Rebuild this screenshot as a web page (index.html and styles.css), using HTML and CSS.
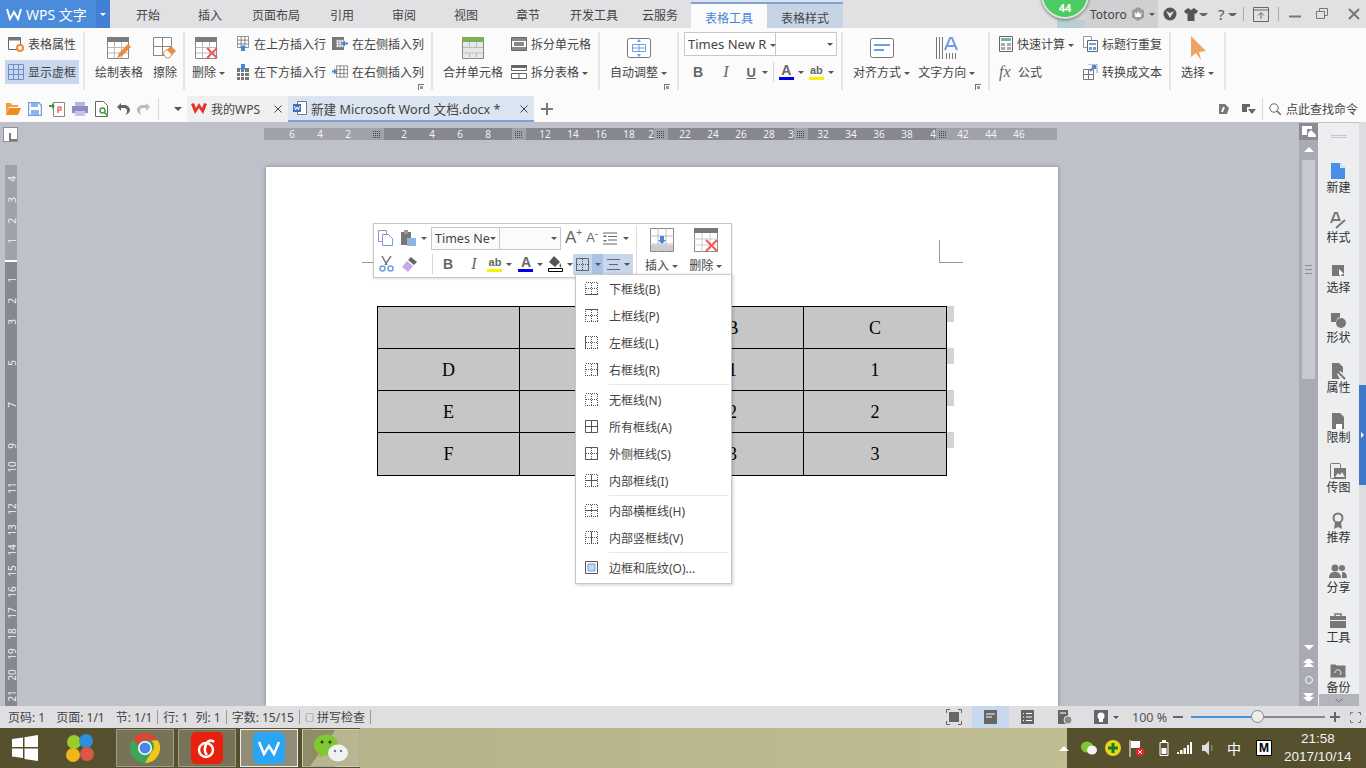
FILE: index.html
```html
<!DOCTYPE html>
<html lang="zh-CN">
<head>
    <meta charset="UTF-8">
    <title>新建 Microsoft Word 文档.docx - WPS 文字</title>
    <link rel="stylesheet" href="styles.css">
</head>
<body>
<svg class="defs" width="0" height="0">
    <symbol id="dots" viewBox="0 0 13 13">
        <path d="M.5.5h12v12H.5zM6.500.5v12M.5 6.500h12" fill="none" stroke="#555" stroke-dasharray="1 1" shape-rendering="crispEdges"/>
    </symbol>
    <symbol id="tbl" viewBox="0 0 16 16">
        <path d="M.5.5h15v15H.5zM5.500.5v15M10.500.5v15M.5 5.500h15M.5 10.500h15" fill="#fff" stroke="#666"/>
    </symbol>
</svg>

<div class="app">
    <header class="titlebar">
        <div class="logo">
            <svg width="16" height="14" viewBox="0 0 16 14"><path d="M1 2l3 10 4-7 4 7 3-10" fill="none" stroke="#fff" stroke-width="2"/></svg>
            <span class="logo-text">WPS 文字</span>
            <span class="logo-drop"><i class="arr white"></i></span>
        </div>
        <nav class="tabs">
            <span class="tab">开始</span>
            <span class="tab">插入</span>
            <span class="tab wide">页面布局</span>
            <span class="tab">引用</span>
            <span class="tab">审阅</span>
            <span class="tab">视图</span>
            <span class="tab">章节</span>
            <span class="tab wide">开发工具</span>
            <span class="tab">云服务</span>
            <span class="tab tool active">表格工具</span>
            <span class="tab tool second">表格样式</span>
        </nav>
        <div class="title-right">
            <div class="badge-slot">
                <span class="badge">44</span>
            </div>
            <div class="user">
                <span>Totoro</span>
                <svg width="16" height="16" viewBox="0 0 16 16"><path d="M8 1l6 3.500v7L8 15l-6-3.500v-7z" fill="#9a9a9a"/><path d="M4.500 6l2 2L8 5l1.500 3 2-2-.8 5H5.300z" fill="#fff"/></svg>
                <i class="arr"></i>
            </div>
            <div class="win-btns">
                <svg width="14" height="14" viewBox="0 0 14 14"><circle cx="7" cy="7" r="6.500" fill="#555"/><path d="M3 4l4 7 4-7-4 2z" fill="#e1e1e3"/></svg>
                <svg class="shirt" width="14" height="13" viewBox="0 0 14 13"><path d="M4 0L0 3l2 3 1.500-1v8h7V5L12 6l2-3-4-3-3 2z" fill="#555"/></svg>
                <i class="arr small"></i>
                <span class="help">?</span>
                <i class="arr small"></i>
                <span class="wsep"></span>
                <svg class="upbox" width="16" height="15" viewBox="0 0 16 15"><path d="M.5.5h15v14H.5zM1 3h14M8 12V6M5 8.500L8 5.500l3 3" fill="none" stroke="#666"/></svg>
                <span class="wsep"></span>
                <svg class="min" width="12" height="12" viewBox="0 0 12 12"><path d="M0 8.500h12" stroke="#777" stroke-width="2"/></svg>
                <svg class="restore" width="12" height="12" viewBox="0 0 12 12"><path d="M.5 3.500h8v7h-8zM3.500 3V.5h8v7H9" fill="none" stroke="#777"/></svg>
                <svg class="close" width="12" height="12" viewBox="0 0 12 12"><path d="M1 1l10 10M11 1L1 11" stroke="#777" stroke-width="2"/></svg>
            </div>
        </div>
    </header>

    <section class="ribbon">
        <div class="group g1">
            <div class="rows">
                <div class="small">
                    <svg width="16" height="16" viewBox="0 0 16 16"><path d="M.5 1.500h12v12H.5z" fill="#fff" stroke="#666"/><path d="M.5 1.500h12v3H.5z" fill="#777"/><circle cx="12" cy="12" r="3" fill="#fff" stroke="#ec8b3c" stroke-width="2"/></svg>
                    <span>表格属性</span>
                </div>
                <div class="small on">
                    <svg width="16" height="16" viewBox="0 0 16 16"><path d="M.5.5h15v15H.5zM5.500.5v15M10.500.5v15M.5 5.500h15M.5 10.500h15" fill="none" stroke="#6f8fc9"/></svg>
                    <span>显示虚框</span>
                </div>
            </div>
        </div>

        <div class="group g2">
            <div class="large">
                <svg width="24" height="24" viewBox="0 0 24 24"><path d="M.5 1.500h21v21H.5z" fill="#fff" stroke="#888"/><path d="M0 1h22v5H0z" fill="#7b7b7b"/><path d="M7.500 6v16M14.500 6v16M1 11.500h20M1 17h20" stroke="#bbb"/><path d="M10 22l2-5 9-9 3 3-9 9z" fill="#ee8a3c"/></svg>
                <span>绘制表格</span>
            </div>
            <div class="large">
                <svg width="24" height="24" viewBox="0 0 24 24"><path d="M.5 1.500h18v18H.5zM9.500 1.500v18M.5 10.500h18" fill="#fff" stroke="#888"/><path d="M10 17l8-7 5 5-7 7h-3z" fill="#ee8a3c"/><path d="M10 17l4-3.500 5 5L16 22h-3z" fill="#fff" stroke="#ee8a3c"/></svg>
                <span>擦除</span>
            </div>
        </div>

        <div class="group g3">
            <div class="large del">
                <svg width="24" height="24" viewBox="0 0 24 24"><path d="M.5 1.500h21v21H.5z" fill="#fff" stroke="#888"/><path d="M0 1h22v5H0z" fill="#7b7b7b"/><path d="M7.500 6v16M14.500 6v16M1 11.500h20M1 17h20" stroke="#bbb"/><path d="M12 12l10 10M22 12L12 22" stroke="#ee5b5b" stroke-width="2"/></svg>
                <span>删除 <i class="arr"></i></span>
            </div>
            <div class="rows grid2 col-96">
                <div class="small">
                    <svg width="14" height="16" viewBox="0 0 14 16"><use href="#tbl" width="12" height="12" x="1"/><path d="M7 9l4 3H9v3H5v-3H3z" fill="#4a86d8"/></svg>
                    <span>在上方插入行</span>
                </div>
                <div class="small">
                    <svg width="16" height="16" viewBox="0 0 16 16"><path d="M0 1h12v13H0z" fill="#777"/><use href="#tbl" width="8" height="13" x="4" y="1"/><path d="M9 7.500l4-3v2h3v2h-3v2z" fill="#4a86d8"/></svg>
                    <span>在左侧插入列</span>
                </div>
                <div class="small">
                    <svg width="14" height="16" viewBox="0 0 14 16"><path d="M1 4h12v12H1z" fill="#777"/><path d="M4.500 4v12M8.500 4v12M1 8.500h12M1 12.500h12" stroke="#fff"/><path d="M7 7L3 4h2V0h4v4h2z" fill="#4a86d8"/></svg>
                    <span>在下方插入行</span>
                </div>
                <div class="small">
                    <svg width="16" height="16" viewBox="0 0 16 16"><use href="#tbl" width="12" height="13" x="4" y="1"/><path d="M6 7.500l-4-3v2H0v2h2v2z" fill="#4a86d8"/></svg>
                    <span>在右侧插入列</span>
                </div>
            </div>
            <i class="launcher"></i>
        </div>

        <div class="group g4">
            <div class="large merge">
                <svg width="24" height="24" viewBox="0 0 24 24"><path d="M1.500 1.500h21v21h-21z" fill="#e8e8e8" stroke="#888"/><path d="M1 1h22v5H1z" fill="#7ab056"/><path d="M8.500 6v5M15.500 6v5M8.500 17v6M15.500 17v6M2 11.500h20M2 17h20" stroke="#bbb"/></svg>
                <span>合并单元格</span>
            </div>
            <div class="rows col-1">
                <div class="small">
                    <svg width="16" height="16" viewBox="0 0 16 16"><path d="M.5 1.500h15v13H.5z" fill="#fff" stroke="#666"/><path d="M1 2h14v3H1zM1 11h14v3H1zM3 6h10v4H3z" fill="#888"/></svg>
                    <span>拆分单元格</span>
                </div>
                <div class="small">
                    <svg width="16" height="16" viewBox="0 0 16 16"><path d="M0 1h16v2H0z" fill="#666"/><path d="M.5 3.500h15v3H.5zM.5 9.500h15v5H.5zM8 9.500v5" fill="#fff" stroke="#666"/></svg>
                    <span>拆分表格 <i class="arr"></i></span>
                </div>
            </div>
        </div>

        <div class="group g5">
            <div class="large">
                <svg width="24" height="24" viewBox="0 0 24 24"><rect x=".5" y="2.500" width="23" height="19" rx="2" fill="#fff" stroke="#777"/><path d="M5.500 8.500h13v7h-13zM12 8.500v7M5.500 12h13" fill="none" stroke="#6f9de0"/><path d="M12 3l2 3h-4zM12 21l2-3h-4z" fill="#6f9de0"/></svg>
                <span>自动调整 <i class="arr"></i></span>
            </div>
            <i class="launcher"></i>
        </div>

        <div class="group g6">
            <div class="fontbox">
                <span class="fname">Times New R <i class="arr"></i></span>
                <span class="fsize"><i class="arr"></i></span>
            </div>
            <div class="fmt">
                <b class="fb">B</b>
                <i class="fi">I</i>
                <span class="fu">U</span><i class="arr"></i>
                <span class="vsep"></span>
                <span class="fcolor">A</span><i class="arr"></i>
                <span class="fhi">ab</span><i class="arr"></i>
            </div>
        </div>

        <div class="group g7">
            <div class="large">
                <svg width="24" height="24" viewBox="0 0 24 24"><rect x=".5" y="2.500" width="23" height="19" rx="2" fill="#fff" stroke="#777"/><path d="M4 9h16M4 14h10" stroke="#6f9de0" stroke-width="2"/></svg>
                <span>对齐方式 <i class="arr"></i></span>
            </div>
            <div class="large">
                <svg width="24" height="24" viewBox="0 0 24 24"><path d="M1.500 1v22M4.500 1v22M7.500 1v22M11.500 17v6M14.500 17v6M17.500 17v6M20.500 17v6" stroke="#777"/><path d="M10 14l5-12h2l5 12M12 10h8" fill="none" stroke="#6f9de0" stroke-width="2"/></svg>
                <span>文字方向 <i class="arr"></i></span>
            </div>
            <i class="launcher"></i>
        </div>

        <div class="group g8">
            <div class="rows grid2 col-84">
                <div class="small">
                    <svg width="14" height="16" viewBox="0 0 14 16"><path d="M.5.5h13v15H.5z" fill="#fff" stroke="#666"/><path d="M2 2h10v3H2z" fill="#6fb8a8"/><path d="M2 7h4v3H2zM8 7h4v3H8zM2 11h4v3H2zM8 11h4v3H8z" fill="#aaa"/></svg>
                    <span>快速计算 <i class="arr"></i></span>
                </div>
                <div class="small">
                    <svg width="15" height="16" viewBox="0 0 15 16"><path d="M.5.5h8v11h-8z" fill="#fff" stroke="#999"/><path d="M4.500 4.500h10v11h-10z" fill="#fff" stroke="#666"/><path d="M6 7h7v2H6zM6 11h3v3H6zM10 11h3v3h-3z" fill="#6f9de0"/></svg>
                    <span>标题行重复</span>
                </div>
                <div class="small">
                    <span class="fx">fx</span>
                    <span>公式</span>
                </div>
                <div class="small">
                    <svg width="15" height="16" viewBox="0 0 15 16"><path d="M.5 5.500h10v10H.5zM5.500 5.500v10M.5 10.500h10" fill="#fff" stroke="#777"/><path d="M5 0h9v9" fill="none" stroke="#999"/><path d="M7 7l5-5M9 2h3v3" fill="none" stroke="#4a86d8" stroke-width="2"/></svg>
                    <span>转换成文本</span>
                </div>
            </div>
        </div>

        <div class="group g9">
            <div class="large">
                <svg width="24" height="24" viewBox="0 0 24 24"><path d="M5 0l15 15-7 1 2 8-5-7-5 4z" fill="#eda363"/></svg>
                <span>选择 <i class="arr"></i></span>
            </div>
        </div>
    </section>

    <div class="quickbar">
        <div class="qa">
            <svg width="16" height="14" viewBox="0 0 16 14"><path d="M1 1h5l1 2h6v2H4l-3 8z" fill="#f2a03d"/><path d="M1 13l3-7h12l-3 7z" fill="#f08d1f"/></svg>
            <svg width="14" height="14" viewBox="0 0 14 14"><path d="M.5.5h10l3 3v10H.5z" fill="#fff" stroke="#6f9de0" stroke-width="1.500"/><path d="M3 1h7v4H3zM3 8h8v5H3z" fill="#8fb3e8"/></svg>
            <svg width="16" height="15" viewBox="0 0 16 15"><path d="M4.500.5h11v14h-11z" fill="#fff" stroke="#888"/><path d="M9 11V5h3v3H9" fill="none" stroke="#d44" stroke-width="1.200"/><path d="M0 3h3V1l3 3-3 3V5H0z" fill="#3c9a3c"/></svg>
            <svg width="16" height="14" viewBox="0 0 16 14"><path d="M3 0h10v4H3z" fill="#b6b6dc"/><path d="M0 4h16v7H0z" fill="#8d8dc6"/><path d="M3 9h10v5H3z" fill="#c6c6e6"/></svg>
            <svg width="14" height="16" viewBox="0 0 14 16"><path d="M.5.5h8l4 4v11H.5z" fill="#fff" stroke="#666"/><circle cx="7.500" cy="9.500" r="2.500" fill="none" stroke="#3c9a3c" stroke-width="1.400"/><path d="M9.500 11.500l3 3" stroke="#3c9a3c" stroke-width="1.600"/></svg>
            <svg width="14" height="14" viewBox="0 0 14 14"><path d="M5 1L1 5l4 4V6h3a3 3 0 013 3c0 2-1 3-2 4 3-1 5-3 5-5 0-3-3-5-6-5H5z" fill="#666"/></svg>
            <svg width="14" height="14" viewBox="0 0 14 14"><path d="M9 1l4 4-4 4V6H6a3 3 0 00-3 3c0 2 1 3 2 4-3-1-5-3-5-5 0-3 3-5 6-5h3z" fill="#bbb"/></svg>
            <span class="qsep"></span>
            <i class="arr big"></i>
        </div>
        <div class="doc-tab home">
            <svg width="16" height="12" viewBox="0 0 16 12"><path d="M0 1l4 10 4-6 4 6 4-10-3-1-2 5-3-5-3 5-2-5z" fill="#e0332d"/></svg>
            <span>我的WPS</span>
            <svg class="x" width="8" height="8" viewBox="0 0 8 8"><path d="M.5.5l7 7M7.500.5l-7 7" stroke="#444"/></svg>
        </div>
        <div class="doc-tab cur">
            <svg width="14" height="14" viewBox="0 0 14 14"><path d="M4.500.5h9v13h-9z" fill="#fff" stroke="#777"/><path d="M0 3h8v8H0z" fill="#3f6fb8"/><path d="M1.500 5l1 4 1.500-3 1.500 3 1-4" fill="none" stroke="#fff"/></svg>
            <span class="doc-name">新建 Microsoft Word 文档.docx *</span>
            <svg class="x" width="8" height="8" viewBox="0 0 8 8"><path d="M.5.5l7 7M7.500.5l-7 7" stroke="#444"/></svg>
        </div>
        <svg class="plus" width="12" height="12" viewBox="0 0 12 12"><path d="M6 0v12M0 6h12" stroke="#777" stroke-width="2"/></svg>
        <div class="q-right">
            <svg width="10" height="12" viewBox="0 0 10 12"><path d="M0 1h6l4 4-2 6H0z" fill="#777"/><path d="M5 4L3 9" stroke="#fff" stroke-width="2"/></svg>
            <svg class="q-pin" width="14" height="11" viewBox="0 0 14 11"><path d="M0 0h8v3h-3v5H0z" fill="#666"/><path d="M6 5h8l-4 5z" fill="#666"/></svg>
            <span class="qsep"></span>
            <svg width="12" height="12" viewBox="0 0 12 12"><circle cx="5" cy="5" r="4.200" fill="none" stroke="#666"/><path d="M8 8l4 4" stroke="#666" stroke-width="1.500"/></svg>
            <span>点此查找命令</span>
        </div>
    </div>

    <div class="workspace">
        <div class="canvas">
            <div class="corner-cell"><span class="corner"></span></div>
            <div class="hruler-cell">
                <div class="hruler">
                    <span>6</span><span>4</span><span>2</span>
                    <em class="mk mk1"></em>
                    <span>2</span><span>4</span><span>6</span><span>8</span>
                    <em class="mk mk2"></em>
                    <span>12</span><span>14</span><span>16</span><span>18</span><span class="cut">2</span>
                    <em class="mk mk3"></em>
                    <span>22</span><span>24</span><span>26</span><span>28</span><span class="cut">3</span>
                    <em class="mk mk4"></em>
                    <span>32</span><span>34</span><span>36</span><span>38</span><span class="cut c4">4</span>
                    <em class="mk mk5"></em>
                    <span>42</span><span>44</span><span>46</span>
                </div>
            </div>
            <div class="vruler-cell">
                <div class="vruler">
                    <div class="v-top">
                        <span>4</span><span>3</span><span>2</span><span>1</span>
                    </div>
                    <div class="v-main">
                        <span>1</span><span>2</span><span>3</span><span></span><span>5</span><span></span><span>7</span><span></span><span>9</span><span>10</span><span>11</span><span>12</span><span>13</span><span>14</span><span>15</span><span>16</span><span>17</span><span>18</span><span>19</span><span>20</span><span>21</span>
                    </div>
                </div>
            </div>
            <div class="page">
                <span class="crop crop-l"></span>
                <span class="crop crop-r"></span>
                <div class="table-wrap">
                    <table class="doc-table">
                        <tr><td></td><td></td><td>B</td><td>C</td></tr>
                        <tr><td>D</td><td></td><td>1</td><td>1</td></tr>
                        <tr><td>E</td><td></td><td>2</td><td>2</td></tr>
                        <tr><td>F</td><td></td><td>3</td><td>3</td></tr>
                    </table>
                    <div class="row-marks"><i></i><i></i><i></i><i></i></div>
                </div>
            </div>
        </div>

        <div class="scrollbar">
            <div class="sb-top">
                <svg width="14" height="12" viewBox="0 0 14 12"><path d="M0 0h10v3H5v6H0z" fill="#fff"/><path d="M6 11V7l3-3 5 5v2z" fill="#fff"/></svg>
            </div>
            <i class="tri up"></i>
            <div class="thumb"><span class="grip"></span></div>
            <div class="sb-bottom">
                <i class="tri down"></i>
                <span class="dbl">
                    <i class="tri up small"></i><i class="tri up small"></i>
                </span>
                <span class="ring"></span>
                <span class="dbl">
                    <i class="tri down small"></i><i class="tri down small"></i>
                </span>
            </div>
        </div>

        <aside class="sidebar">
            <div class="side-grip"></div>
            <div class="side-item">
                <svg width="16" height="18" viewBox="0 0 16 18"><path d="M1 1h9l5 5v11H1z" fill="#4a8fe6"/><path d="M10 1l5 5h-5z" fill="#d6e6fa"/></svg>
                <span>新建</span>
            </div>
            <div class="side-item">
                <svg width="16" height="18" viewBox="0 0 16 18"><path d="M1 11L5 1h2l3 8M3 8h6" fill="none" stroke="#777" stroke-width="2"/><path d="M6 16l9-8" stroke="#777" stroke-width="2"/></svg>
                <span>样式</span>
            </div>
            <div class="side-item">
                <svg width="14" height="18" viewBox="0 0 14 18"><path d="M1 3h12v11H1z" fill="#777"/><path d="M8 7l5 5-3 .5 1 3-3-3z" fill="#fff"/></svg>
                <span>选择</span>
            </div>
            <div class="side-item">
                <svg width="16" height="18" viewBox="0 0 16 18"><path d="M1 1h9v4a6 6 0 00-4 5H1z" fill="#777"/><circle cx="11" cy="11" r="5" fill="#777"/></svg>
                <span>形状</span>
            </div>
            <div class="side-item">
                <svg width="16" height="18" viewBox="0 0 16 18"><path d="M2 1h7l4 4v6l-3-2-3 3 3 5H2z" fill="#777"/><path d="M8 10l7 7" stroke="#777" stroke-width="2"/></svg>
                <span>属性</span>
            </div>
            <div class="side-item">
                <svg width="14" height="18" viewBox="0 0 14 18"><path d="M1 1h8l4 4v12H1z" fill="#777"/><path d="M5 12h6v5H5z" fill="#fff"/></svg>
                <span>限制</span>
            </div>
            <div class="side-item">
                <svg width="16" height="18" viewBox="0 0 16 18"><rect x=".5" y="1.500" width="10" height="15" rx="1" fill="none" stroke="#777"/><path d="M4 6h12v11H4z" fill="#777"/><path d="M5 15l3-4 2 2 2-3 3 5z" fill="#eee"/></svg>
                <span>传图</span>
            </div>
            <div class="side-item">
                <svg width="14" height="18" viewBox="0 0 14 18"><circle cx="7" cy="6" r="4.500" fill="none" stroke="#777" stroke-width="2"/><path d="M4 10l-1 7 4-2 4 2-1-7" fill="#777"/></svg>
                <span>推荐</span>
            </div>
            <div class="side-item">
                <svg width="18" height="18" viewBox="0 0 18 18"><circle cx="6" cy="6" r="3.500" fill="#777"/><circle cx="13" cy="6" r="3" fill="#777"/><path d="M0 16c0-5 3-6 6-6s6 1 6 6zM13 10c3 0 5 1 5 6h-5z" fill="#777"/></svg>
                <span>分享</span>
            </div>
            <div class="side-item">
                <svg width="16" height="18" viewBox="0 0 16 18"><path d="M5 4V2h6v2" fill="none" stroke="#777" stroke-width="1.500"/><path d="M0 4h16v4H0zM0 9h16v7H0z" fill="#777"/></svg>
                <span>工具</span>
            </div>
            <div class="side-item">
                <svg width="16" height="18" viewBox="0 0 16 18"><path d="M.5 2.500h5l1 1h9v12H.5z" fill="#777"/><path d="M5 11a3 3 0 115 2" fill="none" stroke="#eee"/></svg>
                <span>备份</span>
            </div>
            <div class="side-more">
                <svg width="8" height="5" viewBox="0 0 8 5"><path d="M.5.5L4 4 7.500.5" fill="none" stroke="#777"/></svg>
            </div>
        </aside>

        <div class="edge"><span class="edge-blue"><i></i></span></div>
    </div>

    <footer class="statusbar">
        <div class="st-left">
            <span>页码: 1</span>
            <span>页面: 1/1</span>
            <span>节: 1/1</span>
            <span class="bar"></span>
            <span>行: 1</span>
            <span class="col-no">列: 1</span>
            <span class="bar"></span>
            <span>字数: 15/15</span>
            <span class="bar"></span>
            <span class="spell"><span class="chk">□</span>拼写检查</span>
            <span class="bar"></span>
        </div>
        <div class="st-right">
            <span class="view">
                <svg width="16" height="16" viewBox="0 0 16 16"><path d="M3 3h10v10H3z" fill="#666"/><path d="M.5 4V.5H4M12 .5h3.500V4M.5 12v3.500H4M12 15.500h3.500V12" fill="none" stroke="#666"/></svg>
            </span>
            <span class="view sel">
                <svg width="13" height="14" viewBox="0 0 13 14"><path d="M0 0h13v14H0z" fill="#666"/><path d="M2 4h9M2 7h6" stroke="#fff"/></svg>
            </span>
            <span class="view">
                <svg width="13" height="14" viewBox="0 0 13 14"><path d="M0 0h13v14H0z" fill="#666"/><path d="M2 3.500h1M5 3.500h6M2 7h1M5 7h6M2 10.500h1M5 10.500h6" stroke="#fff"/></svg>
            </span>
            <span class="view">
                <svg width="14" height="14" viewBox="0 0 14 14"><path d="M0 0h10v14H0z" fill="#666"/><path d="M2 3h6" stroke="#fff"/><circle cx="10" cy="10" r="4" fill="#888" stroke="#dfdfe2"/></svg>
            </span>
            <span class="view bulb">
                <svg width="14" height="14" viewBox="0 0 14 14"><path d="M0 0h14v14H0z" fill="#666"/><circle cx="7" cy="6" r="3.500" fill="#fff"/><path d="M5 9h4v3H5z" fill="#fff"/></svg>
                <i class="arr"></i>
            </span>
            <span class="zoom-val">100 %</span>
            <svg class="z-minus" width="10" height="2" viewBox="0 0 10 2"><path d="M0 1h10" stroke="#666" stroke-width="2"/></svg>
            <div class="slider"><span class="fill"></span><span class="knob"></span></div>
            <svg class="z-plus" width="10" height="10" viewBox="0 0 10 10"><path d="M5 0v10M0 5h10" stroke="#666" stroke-width="2"/></svg>
            <svg class="z-full" width="11" height="11" viewBox="0 0 11 11"><path d="M.5 3V.5H3M8 .5h2.500V3M.5 8v2.500H3M8 10.500h2.500V8" fill="none" stroke="#777"/></svg>
        </div>
    </footer>

    <div class="taskbar">
        <div class="start">
            <svg width="26" height="26" viewBox="0 0 26 26"><path d="M0 4l11-1.500V12H0zM12.500 2.300L26 0v12H12.500zM0 13.500h11V23L0 21.500zM12.500 13.500H26V26l-13.500-2z" fill="#fff"/></svg>
        </div>
        <div class="pinned">
            <svg width="30" height="30" viewBox="0 0 30 30"><circle cx="9" cy="9" r="7" fill="#9ccc2c"/><circle cx="21" cy="8" r="7" fill="#2d8fdc"/><circle cx="8" cy="22" r="7" fill="#f0b41e"/><circle cx="22" cy="21" r="7" fill="#d9584a"/></svg>
        </div>
        <div class="task">
            <svg width="30" height="30" viewBox="0 0 30 30"><circle cx="15" cy="15" r="15" fill="#3ba558"/><path d="M15 0a15 15 0 0113 7.500H15a7.500 7.500 0 00-7 5L3 6a15 15 0 0112-6z" fill="#dc4437"/><path d="M28 7.500A15 15 0 0115 30l6.500-11a7.500 7.500 0 000-11.500z" fill="#f5c518"/><circle cx="15" cy="15" r="7" fill="#fff"/><circle cx="15" cy="15" r="5.500" fill="#4a86e8"/></svg>
        </div>
        <div class="task">
            <svg width="32" height="32" viewBox="0 0 32 32"><rect width="32" height="32" rx="5" fill="#e8200e"/><circle cx="15" cy="18" r="7" fill="none" stroke="#fff" stroke-width="2.500"/><path d="M16 23c-3-3-3-8 0-12 1-3 5-3 7-1" fill="none" stroke="#fff" stroke-width="2.500"/></svg>
        </div>
        <div class="task active">
            <svg width="32" height="32" viewBox="0 0 32 32"><rect width="32" height="32" rx="6" fill="#2aa5f5"/><path d="M6 10l5 12 5-8 5 8 5-12" fill="none" stroke="#fff" stroke-width="2.500"/></svg>
        </div>
        <div class="task wx">
            <svg width="34" height="28" viewBox="0 0 34 28"><ellipse cx="12" cy="11" rx="12" ry="10.500" fill="#80c832"/><path d="M6 18l-1 6 6-4z" fill="#80c832"/><circle cx="8" cy="8" r="1.500" fill="#333"/><circle cx="16" cy="8" r="1.500" fill="#333"/><ellipse cx="24" cy="19" rx="10" ry="8.500" fill="#f2f2f2"/><circle cx="21" cy="17" r="1.200" fill="#777"/><circle cx="27" cy="17" r="1.200" fill="#777"/></svg>
        </div>
        <div class="tb-space"></div>
        <div class="tray">
            <i class="tri up tray-up"></i>
            <svg width="16" height="14" viewBox="0 0 16 14"><ellipse cx="6" cy="6" rx="6" ry="5.500" fill="#80c832"/><ellipse cx="11" cy="9" rx="5" ry="4.500" fill="#f2f2f2"/></svg>
            <svg width="16" height="16" viewBox="0 0 16 16"><circle cx="8" cy="8" r="8" fill="#e8d418"/><path d="M8 3v10M3 8h10" stroke="#0c7c1e" stroke-width="3"/></svg>
            <svg class="flag" width="16" height="17" viewBox="0 0 16 17"><path d="M1 0v17" stroke="#fff"/><path d="M2 1h9v7H2z" fill="#fff"/><circle cx="11" cy="12" r="4.500" fill="#e02828"/><path d="M9 10l4 4M13 10l-4 4" stroke="#fff"/></svg>
            <svg width="10" height="16" viewBox="0 0 10 16"><path d="M1 2.500h8v13H1z" fill="none" stroke="#fff"/><path d="M3 0h4v2H3zM2.500 8h5v6h-5z" fill="#fff"/></svg>
            <svg class="signal" width="15" height="12" viewBox="0 0 15 12"><path d="M0 10h2v2H0zM3 8h2.500v4H3zM6.500 6H9v6H6.500zM10 3h2v9h-2zM13 0h2v12h-2z" fill="#fff"/></svg>
            <svg width="12" height="14" viewBox="0 0 12 14"><path d="M0 4h3l4-4v14l-4-4H0z" fill="#ddd"/><path d="M9 4c1.500 2 1.500 4 0 6" fill="none" stroke="#aaa"/></svg>
            <span class="ime">中</span>
            <span class="mbox">M</span>
            <div class="clock"><span>21:58</span><span>2017/10/14</span></div>
        </div>
    </div>

    <!-- floating table toolbar -->
    <div class="float-bar">
        <div class="fb-left">
            <div class="fb-row">
                <svg class="ml1" width="15" height="16" viewBox="0 0 15 16"><path d="M.5.5h8v11h-8z" fill="#fff" stroke="#999"/><path d="M4.500 4.500h6l4 4v7h-10z" fill="#fff" stroke="#6f9de0"/></svg>
                <svg class="ml8" width="16" height="16" viewBox="0 0 16 16"><path d="M0 2h10v13H0z" fill="#777"/><path d="M3 0h4v4H3z" fill="#999"/><path d="M6 8h9v8H6z" fill="#8fb3e8"/></svg>
                <i class="arr ml4"></i>
                <div class="fb-font">
                    <span class="name"><span class="nm">Times Ne</span><i class="arr"></i></span>
                    <span class="size"><i class="arr"></i></span>
                </div>
                <span class="grow ml4">A<sup>+</sup></span>
                <span class="grow shrink ml4">A<sup>-</sup></span>
                <svg class="ml5" width="14" height="13" viewBox="0 0 14 13"><path d="M0 1h14M5 4.500h9M5 8h9M0 12h14" stroke="#666"/><path d="M2 3l2 2H0zM2 10l2-2H0z" fill="#666"/></svg>
                <i class="arr ml6"></i>
            </div>
            <div class="fb-row row2">
                <svg class="ml2" width="15" height="16" viewBox="0 0 15 16"><path d="M3 0l5 9M12 0L6 9" stroke="#777" stroke-width="1.500"/><circle cx="3.500" cy="12.500" r="2.500" fill="none" stroke="#6f9de0" stroke-width="1.500"/><circle cx="11.500" cy="12.500" r="2.500" fill="none" stroke="#6f9de0" stroke-width="1.500"/></svg>
                <svg class="ml8" width="15" height="15" viewBox="0 0 15 15"><path d="M9 0l6 5-3 3-6-5z" fill="#666"/><path d="M5 4l6 5-5 6-6-5z" fill="#c9a8ea"/></svg>
                <span class="vsep ml15"></span>
                <b class="fb ml10">B</b>
                <i class="fi ml18">I</i>
                <span class="fhi ml11">ab</span><i class="arr ml4"></i>
                <span class="fcolor ml6">A</span><i class="arr ml4"></i>
                <svg class="ml5" width="15" height="16" viewBox="0 0 15 16"><path d="M6 0l6 6-5 5-6-5z" fill="#555"/><path d="M12 7c1 2 2 3 1 4s-2 0-1-4z" fill="#555"/><path d="M.5 12.500h14v3H.5z" fill="#fff" stroke="#000"/></svg>
                <i class="arr ml4"></i>
                <div class="fb-on">
                    <span class="bd"><svg width="13" height="13"><use href="#dots"/><path d="M.5.5h12v12H.5z" fill="none" stroke="#666"/></svg></span>
                    <span class="bd-arr"><i class="arr"></i></span>
                    <span class="al"><svg width="13" height="11" viewBox="0 0 13 11"><path d="M0 .5h13M2 5.500h9M0 10.500h13" stroke="#666"/></svg><i class="arr"></i></span>
                </div>
            </div>
        </div>
        <div class="fb-right">
            <div class="fb-big">
                <svg width="24" height="24" viewBox="0 0 24 24"><path d="M.5.5h23v23H.5z" fill="#fff" stroke="#888"/><path d="M8 0v24M16 0v24M0 8h24M0 16h24" stroke="#bbb"/><path d="M1 17h22v6H1z" fill="#ccc"/><path d="M12 16l-4-4h2V8h4v4h2z" fill="#4a86d8"/></svg>
                <span>插入 <i class="arr"></i></span>
            </div>
            <div class="fb-big">
                <svg width="24" height="24" viewBox="0 0 24 24"><path d="M.5.5h23v23H.5z" fill="#fff" stroke="#888"/><path d="M0 0h24v5H0z" fill="#777"/><path d="M8 5v19M16 5v19M0 11h24M0 17h24" stroke="#ccc"/><path d="M12 12l11 11M23 12L12 23" stroke="#ee5b5b" stroke-width="2"/></svg>
                <span>删除 <i class="arr"></i></span>
            </div>
        </div>
    </div>

    <!-- borders dropdown -->
    <ul class="menu">
        <li><svg width="13" height="13"><use href="#dots"/><path d="M0 12.500h13" stroke="#555"/></svg>下框线(B)</li>
        <li><svg width="13" height="13"><use href="#dots"/><path d="M0 .5h13" stroke="#555"/></svg>上框线(P)</li>
        <li><svg width="13" height="13"><use href="#dots"/><path d="M.5 0v13" stroke="#555"/></svg>左框线(L)</li>
        <li><svg width="13" height="13"><use href="#dots"/><path d="M12.500 0v13" stroke="#555"/></svg>右框线(R)</li>
        <li class="line"></li>
        <li><svg width="13" height="13"><use href="#dots"/></svg>无框线(N)</li>
        <li><svg width="13" height="13"><path d="M.5.5h12v12H.5zM6.500.5v12M.5 6.500h12" fill="none" stroke="#555"/></svg>所有框线(A)</li>
        <li><svg width="13" height="13"><use href="#dots"/><path d="M.5.5h12v12H.5z" fill="none" stroke="#555"/></svg>外侧框线(S)</li>
        <li><svg width="13" height="13"><use href="#dots"/><path d="M6.500.5v12M.5 6.500h12" fill="none" stroke="#555"/></svg>内部框线(I)</li>
        <li class="line"></li>
        <li><svg width="13" height="13"><use href="#dots"/><path d="M.5 6.500h12" fill="none" stroke="#555"/></svg>内部横框线(H)</li>
        <li><svg width="13" height="13"><use href="#dots"/><path d="M6.500.5v12" fill="none" stroke="#555"/></svg>内部竖框线(V)</li>
        <li class="line"></li>
        <li><svg width="13" height="13"><path d="M.5.5h12v12H.5z" fill="none" stroke="#555"/><path d="M3 3h7v7H3z" fill="#c6d7ee" stroke="#6f9de0"/></svg>边框和底纹(O)...</li>
    </ul>
</div>
</body>
</html>
```

FILE: styles.css
```css
* {
    box-sizing: border-box;
}
html, body {
    margin: 0;
    padding: 0;
}
body {
    font-family: "Noto Sans", "Noto Sans CJK SC", sans-serif;
    font-size: 12px;
    color: #444;
}
svg {
    display: block;
    flex: none;
}
.defs {
    position: absolute;
}
.app {
    position: relative;
    width: 1366px;
    height: 768px;
    display: flex;
    flex-direction: column;
    overflow: hidden;
}

/* small dropdown arrow */
.arr {
    display: inline-block;
    width: 0;
    height: 0;
    border-left: 3px solid transparent;
    border-right: 3px solid transparent;
    border-top: 3px solid #555;
    vertical-align: middle;
    flex: none;
}
.arr.white {
    border-top-color: #fff;
}
.arr.big {
    border-left-width: 4px;
    border-right-width: 4px;
    border-top-width: 4px;
    margin-left: 8px;
}

/* title bar */
.titlebar {
    height: 28px;
    display: flex;
    background: #e1e1e3;
    flex: none;
}
.logo {
    width: 110px;
    display: flex;
    align-items: center;
    padding-left: 6px;
    background: #4a8bdb;
    color: #fff;
}
.logo-text {
    margin-left: 4px;
    font-size: 14px;
    width: 70px;
    white-space: nowrap;
}
.logo-drop {
    width: 14px;
    height: 28px;
    background: #4380d4;
    display: flex;
    align-items: center;
    justify-content: center;
}
.tabs {
    display: flex;
    padding-left: 7px;
    flex: 1;
}
.tab {
    width: 62px;
    text-align: center;
    line-height: 32px;
    height: 28px;
}
.tab.wide {
    width: 70px;
}
.tab.tool {
    width: 76px;
    margin-top: 2px;
    height: 26px;
    border-top: 2px solid #7ba3db;
    line-height: 29px;
}
.tab.active {
    background: #fbfbfb;
    color: #4a86d8;
}
.tab.second {
    background: #c7d4e6;
}
.title-right {
    display: flex;
    width: 309px;
    flex: none;
}
.badge-slot {
    position: relative;
    width: 28px;
    background: linear-gradient(#d6d6d8 20px, #b8cfd6 20px);
}
.badge {
    position: absolute;
    left: -16px;
    top: -29px;
    width: 48px;
    height: 48px;
    border-radius: 50%;
    background: #4ccb62;
    border: 2px solid #d8e4dc;
    box-shadow: 0 1px 3px rgba(0, 0, 0, .5);
    color: #fff;
    font-weight: bold;
    font-size: 11px;
    text-align: center;
    padding-top: 28px;
    line-height: 14px;
}
.user {
    width: 73px;
    background: #d0d0d2;
    display: flex;
    align-items: center;
    gap: 3px;
    padding-left: 5px;
}
.win-btns {
    display: flex;
    align-items: center;
    flex: 1;
    padding-left: 5px;
}
.win-btns .shirt {
    margin-left: 7px;
}
.win-btns .arr.small {
    margin-left: 1px;
    border-top-color: #666;
}
.help {
    font-size: 15px;
    color: #555;
    margin-left: 10px;
    margin-right: 2px;
}
.wsep {
    width: 1px;
    height: 14px;
    background: #aaa;
    margin-left: 6px;
}
.upbox {
    margin-left: 9px;
}
.win-btns .upbox + .wsep {
    margin-left: 9px;
}
.min {
    margin-left: 10px;
}
.restore {
    margin-left: 15px;
}
.close {
    margin-left: 20px;
}

/* ribbon */
.ribbon {
    height: 68px;
    background: #fbfbfb;
    display: flex;
    flex: none;
    align-items: flex-start;
}
.group {
    position: relative;
    height: 58px;
    margin-top: 4px;
    border-right: 2px solid #e6e6e6;
    display: flex;
}
.g1 { width: 85px; padding-left: 5px; }
.g2 { width: 100px; padding-left: 10px; gap: 10px; }
.g3 { width: 248px; padding-left: 7px; }
.g4 { width: 167px; padding-left: 10px; }
.g5 { width: 79px; padding-left: 10px; }
.g6 { width: 164px; padding-left: 5px; flex-direction: column; }
.g7 { width: 147px; padding-left: 10px; gap: 8px; }
.g8 { width: 181px; padding-left: 9px; }
.g9 { width: 55px; padding-left: 10px; }
.rows {
    display: grid;
    grid-auto-rows: 24px;
    row-gap: 4px;
}
.grid2 {
    grid-template-columns: 96px auto;
}
.col-84 {
    grid-template-columns: 84px auto;
}
.small {
    display: flex;
    align-items: center;
    gap: 4px;
    padding: 0 3px 0 0;
    white-space: nowrap;
}
.g1 .small {
    padding-left: 3px;
}
.small.on {
    background: #c6d7ee;
}
.fx {
    width: 15px;
    font-family: "Liberation Serif", serif;
    font-style: italic;
    font-size: 16px;
    color: #666;
}
.large {
    display: flex;
    flex-direction: column;
    align-items: center;
    white-space: nowrap;
}
.large svg {
    height: 24px;
    margin-top: 4px;
}
.large span {
    height: 24px;
    line-height: 26px;
}
.del {
    width: 44px;
    align-items: flex-start;
}
.del svg {
    margin-left: 3px;
}
.merge {
    width: 68px;
    align-items: flex-start;
}
.merge svg {
    margin-left: 18px;
}
.launcher {
    position: absolute;
    right: 7px;
    bottom: 0;
    width: 6px;
    height: 6px;
    border: 1px solid #777;
    border-width: 1px 0 0 1px;
}
.launcher::after {
    content: "";
    display: block;
    width: 3px;
    height: 3px;
    margin: 1px;
    background: #999;
}
.fontbox {
    width: 153px;
    height: 24px;
    border: 1px solid #c8c8c8;
    display: flex;
    background: #fff;
    flex: none;
}
.fname {
    width: 91px;
    padding-left: 3px;
    font-size: 13px;
    line-height: 22px;
    white-space: nowrap;
    border-right: 1px solid #c8c8c8;
}
.fsize {
    flex: 1;
    display: flex;
    align-items: center;
    justify-content: flex-end;
    padding-right: 3px;
}
.fmt {
    display: flex;
    align-items: center;
    height: 24px;
    margin-top: 4px;
}
.fb, .fi, .fu {
    font-family: "Liberation Serif", serif;
    font-size: 16px;
    color: #666;
}
.fb {
    font-family: "Liberation Sans", sans-serif;
    font-weight: bold;
    font-size: 14px;
}
.fmt .fb {
    margin-left: 9px;
}
.fmt .fi {
    margin-left: 20px;
}
.fmt .fu {
    font-family: "Liberation Sans", sans-serif;
    font-weight: bold;
    font-size: 13px;
    margin-left: 18px;
    text-decoration: underline;
}
.fmt .fu + .arr {
    margin-left: 6px;
}
.vsep {
    width: 1px;
    height: 20px;
    background: #d6d6d6;
    flex: none;
}
.fmt .vsep {
    margin-left: 5px;
}
.fcolor, .fhi {
    display: inline-block;
    color: #666;
    font-weight: bold;
    text-align: center;
    line-height: 13px;
    font-family: "Liberation Sans", sans-serif;
    font-size: 14px;
    width: 15px;
    height: 16px;
    border-bottom: 3px solid #0000e6;
    flex: none;
}
.fhi {
    font-size: 11px;
    border-bottom-color: #f5f500;
}
.fmt .fcolor {
    margin-left: 5px;
}
.fmt .fcolor + .arr, .fmt .fhi + .arr {
    margin-left: 4px;
}
.fmt .fhi {
    margin-left: 5px;
}

/* quick access + document tabs */
.quickbar {
    height: 26px;
    background: #fbfbfb;
    display: flex;
    align-items: center;
    flex: none;
}
.qa {
    display: flex;
    align-items: center;
    gap: 7px;
    width: 187px;
    padding-left: 5px;
}
.qsep {
    width: 1px;
    height: 22px;
    background: #d8d8d8;
    flex: none;
}
.doc-tab {
    height: 26px;
    display: flex;
    align-items: center;
    font-size: 12px;
    white-space: nowrap;
    position: relative;
}
.doc-tab.home {
    width: 101px;
    background: #f0f0f1;
    padding-left: 4px;
    gap: 4px;
}
.doc-tab.cur {
    width: 246px;
    background: #dbe5f1;
    border-bottom: 2px solid #7ba3db;
    padding-left: 5px;
    gap: 4px;
}
.doc-tab .x {
    position: absolute;
    right: 6px;
    top: 9px;
}
.doc-name {
    font-size: 12.600px;
}
.plus {
    margin-left: 7px;
}
.q-right {
    margin-left: auto;
    display: flex;
    align-items: center;
    padding-right: 8px;
    white-space: nowrap;
}
.q-pin {
    margin-left: 13px;
}
.q-right .qsep {
    margin: 0 6px 0 6px;
}
.q-right span:last-child {
    margin-left: 5px;
}

/* workspace */
.workspace {
    flex: 1;
    display: flex;
    min-height: 0;
    background: #bfc1ca;
    overflow: hidden;
}
.canvas {
    width: 1299px;
    display: grid;
    grid-template-columns: 264px 794px;
    grid-template-rows: 45px 539px;
}
.corner-cell {
    padding: 5px 0 0 3px;
}
.corner {
    display: block;
    width: 15px;
    height: 15px;
    background: #fff;
    border: 1px solid #8f9099;
    position: relative;
}
.corner::after {
    content: "";
    position: absolute;
    left: 5px;
    top: 5px;
    width: 6px;
    height: 6px;
    border: solid #777;
    border-width: 0 0 2px 2px;
}
.hruler-cell {
    padding: 6px 1px 0 0;
}
.hruler {
    height: 12px;
    padding-left: 14px;
    display: flex;
    background: linear-gradient(90deg, #a0a1a9 120px, #86878f 120px, #86878f 674px, #a0a1a9 674px);
    color: #f2f2f2;
    font-size: 10px;
    line-height: 12px;
    text-align: center;
    overflow: hidden;
}
.hruler span {
    width: 28px;
    flex: none;
}
.hruler .cut {
    width: 11px;
    text-align: right;
}
.hruler .c4 {
    width: 15px;
}
.mk {
    width: 14px;
    flex: none;
    padding: 2px 3px;
    background: conic-gradient(#444 25%, transparent 0) center / 2px 2px content-box, #a0a1a9;
}
.mk1 { margin: 0 6px 0 8px; }
.mk2 { margin: 0 5px 0 10px; }
.mk3 { margin: 0 3px 0 0; }
.mk4 { margin: 0 1px 0 0; }
.mk5 { margin: 0 -1px 0 0; }
.vruler-cell {
    margin-top: -2px;
    padding-left: 5px;
}
.vruler {
    width: 12px;
    height: 541px;
    color: #f2f2f2;
    font-size: 10px;
    background: #86878f;
}
.v-top {
    height: 97px;
    background: #a0a1a9;
    border-bottom: 2px solid #fff;
    padding-top: 4px;
}
.v-top span, .v-main span {
    display: flex;
    align-items: center;
    justify-content: center;
    height: 20.800px;
    writing-mode: vertical-rl;
    transform: rotate(180deg);
}
.v-main {
    padding-top: 8px;
}
.page {
    position: relative;
    margin-left: 2px;
    background: #fff;
    padding: 139px 0 0 111px;
    box-shadow: 0 0 4px rgba(60, 60, 80, .5);
}
.crop {
    position: absolute;
    top: 73px;
    width: 24px;
    height: 23px;
    border-bottom: 1px solid #999;
}
.crop-l {
    left: 96px;
    border-right: 1px solid #999;
}
.crop-r {
    left: 673px;
    border-left: 1px solid #999;
}
.table-wrap {
    display: flex;
}
.doc-table {
    width: 570px;
    table-layout: fixed;
    border-collapse: collapse;
    font-family: "Liberation Serif", serif;
    font-size: 18px;
    color: #000;
    background: #c6c6c6;
    text-align: center;
}
.doc-table td {
    border: 1px solid #000;
    height: 42px;
    padding: 1px 0 0;
}
.doc-table td:nth-child(-n+3) {
    width: 142px;
}
.doc-table tr:last-child td {
    height: 43px;
}
.row-marks i {
    display: block;
    width: 7px;
    height: 16px;
    background: #d3d3d3;
    margin-bottom: 26px;
}

/* vertical scrollbar */
.scrollbar {
    width: 19px;
    background: #a9aab3;
    display: flex;
    flex-direction: column;
    align-items: center;
    margin-top: 1px;
}
.sb-top {
    width: 19px;
    height: 17px;
    background: #8a8b93;
    display: flex;
    align-items: center;
    justify-content: center;
    flex: none;
}
.tri {
    display: block;
    width: 0;
    height: 0;
    border-left: 5px solid transparent;
    border-right: 5px solid transparent;
    flex: none;
}
.tri.up {
    border-bottom: 5px solid #fff;
}
.tri.down {
    border-top: 5px solid #fff;
}
.tri.small {
    border-left-width: 4px;
    border-right-width: 4px;
    border-bottom-width: 4px;
    border-top-width: 4px;
}
.tri.up.small {
    border-top-width: 0;
}
.tri.down.small {
    border-bottom-width: 0;
}
.scrollbar > .tri {
    margin-top: 7px;
}
.thumb {
    width: 13px;
    height: 219px;
    margin-top: 8px;
    background: #c8c9ce;
    display: flex;
    align-items: center;
    justify-content: center;
    flex: none;
}
.grip {
    width: 7px;
    height: 9px;
    border-top: 1px solid #8f8f96;
    border-bottom: 1px solid #8f8f96;
    position: relative;
}
.grip::after {
    content: "";
    position: absolute;
    left: 0;
    right: 0;
    top: 3px;
    height: 1px;
    background: #8f8f96;
}
.sb-bottom {
    margin-top: auto;
    display: flex;
    flex-direction: column;
    align-items: center;
    gap: 9px;
    padding-bottom: 5px;
}
.dbl {
    display: block;
}
.ring {
    display: block;
    width: 8px;
    height: 8px;
    border: 1px solid #fff;
    border-radius: 50%;
}

/* right sidebar */
.sidebar {
    width: 41px;
    background: #eceef0;
    margin-top: 1px;
    display: flex;
    flex-direction: column;
    align-items: center;
    position: relative;
}
.side-grip {
    width: 16px;
    height: 3px;
    margin: 12px 0 7px;
    border-top: 1px solid #c6c7cc;
    border-bottom: 1px solid #c6c7cc;
    flex: none;
}
.side-item {
    height: 50px;
    flex: none;
    display: flex;
    flex-direction: column;
    align-items: center;
    justify-content: flex-end;
    color: #333;
    line-height: 14px;
}
.side-item svg {
    height: 20px;
}
.side-more {
    position: absolute;
    left: 1px;
    right: 0;
    bottom: 0;
    height: 12px;
    background: #b4b5bc;
    display: flex;
    align-items: center;
    justify-content: center;
}
.edge {
    width: 7px;
    background: #dcdde0;
    padding-top: 263px;
}
.edge-blue {
    display: flex;
    align-items: center;
    justify-content: center;
    height: 100px;
    background: #3d78c9;
}
.edge-blue i {
    border-left: 3px solid #fff;
    border-top: 3px solid transparent;
    border-bottom: 3px solid transparent;
}

/* status bar */
.statusbar {
    height: 22px;
    flex: none;
    background: #dfdfe2;
    display: flex;
    align-items: center;
    justify-content: space-between;
    white-space: nowrap;
}
.st-left {
    display: flex;
    align-items: center;
    padding-left: 8px;
    gap: 11px;
}
.st-left .bar {
    width: 1px;
    height: 14px;
    background: #999;
    margin: 0 -6px;
}
.st-left .col-no {
    margin-left: -4px;
}
.spell {
    display: flex;
    align-items: center;
    gap: 3px;
}
.chk {
    font-size: 9px;
}
.st-right {
    display: flex;
    align-items: center;
    height: 22px;
    width: 431px;
}
.view {
    width: 37px;
    height: 22px;
    flex: none;
    display: flex;
    align-items: center;
    justify-content: center;
}
.view.sel {
    background: #c6d7ee;
}
.view.bulb {
    width: 40px;
    justify-content: flex-start;
    padding-left: 11px;
    gap: 5px;
}
.zoom-val {
    margin-left: 9px;
    font-size: 12.500px;
    color: #555;
}
.z-minus {
    margin-left: 6px;
}
.slider {
    position: relative;
    width: 134px;
    height: 2px;
    margin-left: 8px;
    background: #888;
    flex: none;
}
.slider .fill {
    display: block;
    width: 62px;
    height: 2px;
    background: #4a8fe6;
}
.knob {
    position: absolute;
    left: 60px;
    top: -6px;
    width: 13px;
    height: 13px;
    border-radius: 50%;
    background: #eee;
    border: 1px solid #888;
}
.z-plus {
    margin-left: 5px;
}
.z-full {
    margin-left: 10px;
}

/* taskbar */
.taskbar {
    height: 40px;
    flex: none;
    display: flex;
    background: #56502f;
}
.start {
    width: 52px;
    display: flex;
    align-items: center;
    padding-left: 12px;
}
.pinned {
    width: 64px;
    display: flex;
    align-items: center;
    padding-left: 13px;
}
.task {
    width: 58px;
    height: 38px;
    margin: 1px 4px 1px 0;
    border: 1px solid rgba(255, 255, 255, .3);
    background: rgba(255, 255, 255, .2);
    display: flex;
    align-items: center;
    justify-content: center;
    flex: none;
}
.task.active {
    border: 1px solid #eee;
    background: rgba(255, 255, 255, .35);
}
.task.wx {
    background: linear-gradient(125deg, #8f8c68 40%, #b8b590 40%);
    margin-right: 0;
}
.tb-space {
    flex: 1;
    background: linear-gradient(90deg, #b6b38a, #c0bd92);
}
.tray {
    width: 307px;
    display: flex;
    align-items: center;
    color: #fff;
    background: linear-gradient(90deg, #c0bd92 8px, #56502f 8px);
}
.tray-up {
    margin-right: 12px;
}
.tray svg {
    margin-right: 8px;
}
.tray svg.flag {
    margin-right: 14px;
}
.tray svg.signal {
    margin-right: 10px;
}
.ime {
    font-size: 14px;
    margin: 0 15px 0 5px;
}
.mbox {
    width: 16px;
    height: 16px;
    background: #fff;
    color: #000;
    border: 1px solid #000;
    font-family: "Liberation Sans", sans-serif;
    font-weight: bold;
    font-size: 12px;
    line-height: 14px;
    text-align: center;
}
.clock {
    display: flex;
    flex-direction: column;
    align-items: center;
    margin-left: 12px;
    font-family: "Liberation Sans", sans-serif;
    font-size: 13.500px;
    line-height: 18px;
    color: #f2f2f2;
}

/* floating toolbar */
.float-bar {
    position: absolute;
    left: 373px;
    top: 223px;
    width: 359px;
    height: 55px;
    background: #fff;
    border: 1px solid #c8c8c8;
    display: flex;
    box-shadow: 0 1px 2px rgba(0, 0, 0, .15);
}
.fb-left {
    width: 263px;
    padding-left: 3px;
    border-right: 1px solid #ddd;
    margin: 2px 0 2px;
}
.fb-row {
    display: flex;
    align-items: center;
    height: 24px;
}
.fb-row.row2 {
    margin-top: 2px;
}
.fb-font {
    display: flex;
    height: 23px;
    width: 130px;
    margin-left: 4px;
    border: 1px solid #c8c8c8;
    background: #fbfbfb;
}
.fb-font .name {
    width: 68px;
    padding-left: 3px;
    font-size: 12.500px;
    line-height: 21px;
    border-right: 1px solid #c8c8c8;
    white-space: nowrap;
    display: flex;
    align-items: center;
    justify-content: space-between;
    padding-right: 3px;
}
.fb-font .size {
    flex: 1;
    display: flex;
    align-items: center;
    justify-content: flex-end;
    padding-right: 3px;
}
.grow {
    font-size: 17px;
    color: #666;
    font-family: "Liberation Sans", sans-serif;
    line-height: 20px;
}
.grow.shrink {
    font-size: 13px;
}
.grow sup {
    font-size: 10px;
    line-height: 0;
}
.ml1 { margin-left: 1px; }
.ml2 { margin-left: 2px; }
.ml4 { margin-left: 4px; }
.ml5 { margin-left: 5px; }
.ml6 { margin-left: 6px; }
.ml8 { margin-left: 8px; }
.ml10 { margin-left: 10px; }
.ml11 { margin-left: 11px; }
.ml15 { margin-left: 15px; }
.ml18 { margin-left: 18px; }
.fb-on {
    display: flex;
    height: 21px;
    background: #c6d7ee;
}
.fb-on .bd {
    width: 19px;
    display: flex;
    align-items: center;
    justify-content: center;
}
.fb-on .bd-arr {
    width: 11px;
    background: #a9c3e6;
    display: flex;
    align-items: center;
    justify-content: center;
}
.fb-on .al {
    width: 30px;
    display: flex;
    align-items: center;
    justify-content: center;
    gap: 4px;
}
.fb-right {
    display: flex;
    flex: 1;
    padding: 4px 0 0 8px;
    gap: 11px;
}
.fb-big {
    display: flex;
    flex-direction: column;
    align-items: center;
    white-space: nowrap;
}
.fb-big span {
    margin-top: 5px;
    line-height: 18px;
}

/* borders menu */
.menu {
    position: absolute;
    left: 575px;
    top: 274px;
    width: 157px;
    height: 310px;
    margin: 0;
    padding: 0;
    list-style: none;
    background: #fff;
    border: 1px solid #c8c8c8;
    box-shadow: 1px 1px 3px rgba(0, 0, 0, .2);
}
.menu li {
    height: 27px;
    display: flex;
    align-items: center;
    padding-left: 9px;
    gap: 11px;
}
.menu li.line {
    height: 1px;
    margin: 1px 2px 1px 33px;
    padding: 0;
    background: #e8e8e8;
}
```
